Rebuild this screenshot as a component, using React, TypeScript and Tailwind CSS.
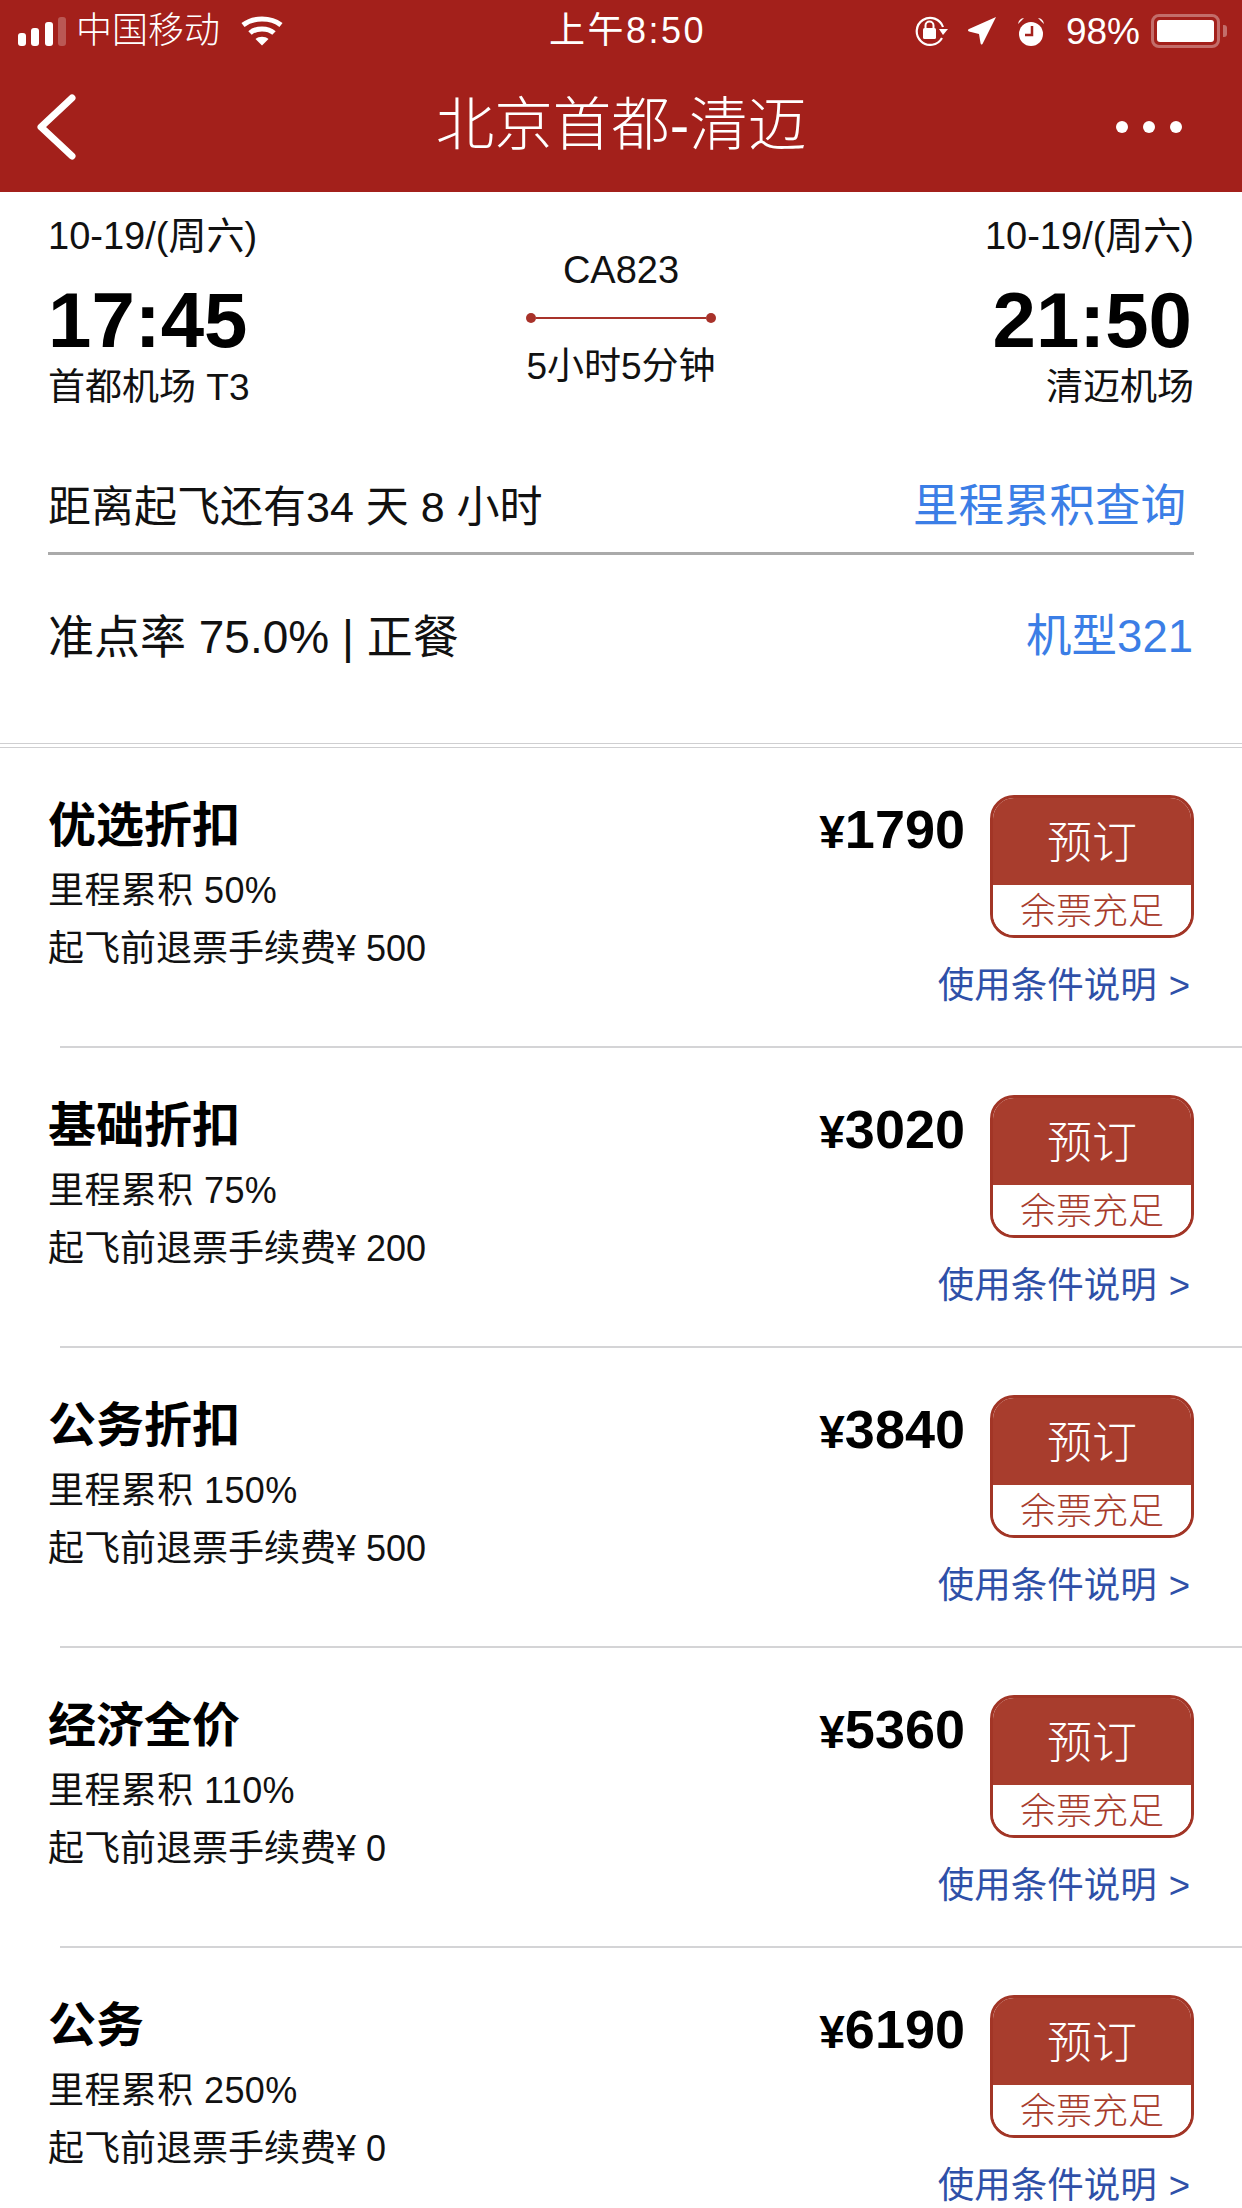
const fontStack = { fontFamily: '"Liberation Sans", "Noto Sans CJK SC", sans-serif' };

type Fare = {
  name: string;
  price: string;
  miles: string;
  fee: string;
};

const fares: Fare[] = [
  { name: "优选折扣", price: "1790", miles: "50%", fee: "500" },
  { name: "基础折扣", price: "3020", miles: "75%", fee: "200" },
  { name: "公务折扣", price: "3840", miles: "150%", fee: "500" },
  { name: "经济全价", price: "5360", miles: "110%", fee: "0" },
  { name: "公务", price: "6190", miles: "250%", fee: "0" },
];

function SignalBars() {
  return (
    <div className="flex h-[29px] w-[48px] items-end justify-between">
      <div className="h-[13px] w-[8px] rounded-[3px] bg-white" />
      <div className="h-[18px] w-[8px] rounded-[3px] bg-white" />
      <div className="h-[24px] w-[8px] rounded-[3px] bg-white" />
      <div className="h-[29px] w-[8px] rounded-[3px] bg-white/25" />
    </div>
  );
}

function WifiIcon() {
  return (
    <svg width="42" height="30" viewBox="0 0 42 30" fill="none" stroke="white" strokeWidth="5">
      <path d="M2 9 C12 1 30 1 40 9" />
      <path d="M9 17 C15 11.500 27 11.500 33 17" />
      <path d="M21 29.500 L14.500 23 C18 20 24 20 27.500 23 Z" fill="white" stroke="none" />
    </svg>
  );
}

function RotationLockIcon() {
  return (
    <svg width="36" height="30" viewBox="0 0 36 30" fill="none">
      <path d="M29 22 A13.500 13.500 0 1 1 30 11" stroke="white" strokeWidth="2.200" />
      <path d="M26 13 L35 13 L30 19 Z" fill="white" />
      <rect x="10" y="12" width="13" height="11" rx="1.500" fill="white" />
      <path d="M12.500 12 V9.500 A4 4 0 0 1 20.500 9.500 V12" stroke="white" strokeWidth="2" />
    </svg>
  );
}

function LocationIcon() {
  return (
    <svg width="28" height="28" viewBox="0 0 28 28">
      <path d="M28 0 L14.500 27 Q13 28.500 12.500 26 L11 17 L1 14.500 Q-1 13 1 12 Z" fill="white" />
    </svg>
  );
}

function AlarmIcon() {
  return (
    <svg width="28" height="29" viewBox="0 0 28 29">
      <circle cx="14" cy="17" r="12" fill="white" />
      <path d="M1 7 Q2 1.500 7 1 Z M27 7 Q26 1.500 21 1 Z" fill="white" />
      <path d="M15 9 V18 H8" fill="none" stroke="#a3201b" strokeWidth="2.500" />
    </svg>
  );
}

function BatteryIcon() {
  return (
    <div className="flex items-center gap-[3px]">
      <div className="h-[34px] w-[69px] rounded-[8px] border-[3px] border-white/35 p-[3px]">
        <div className="h-full w-full rounded-[3px] bg-white" />
      </div>
      <div className="h-[12px] w-[4px] rounded-r-[3px] bg-white/35" />
    </div>
  );
}

function StatusBar() {
  return (
    <div className="flex h-[62px] items-center pr-[15px] pl-[18px] text-[36px] leading-none text-white">
      <div className="flex flex-1 items-center">
        <SignalBars />
        <span className="ml-[10px] font-light">中国移动</span>
        <div className="ml-[21px]">
          <WifiIcon />
        </div>
      </div>
      <span className="absolute left-[549px] tracking-[2.500px]">上午8:50</span>
      <div className="flex items-center">
        <RotationLockIcon />
        <div className="ml-[19px]">
          <LocationIcon />
        </div>
        <div className="ml-[21px]">
          <AlarmIcon />
        </div>
        <span className="ml-[21px] text-[37px]">98%</span>
        <div className="ml-[11px]">
          <BatteryIcon />
        </div>
      </div>
    </div>
  );
}

function NavBar() {
  return (
    <div className="grid h-[130px] grid-cols-[1fr_auto_1fr] items-center px-[60px]">
      <svg className="-ml-[24px]" width="42" height="66" viewBox="0 0 42 66" fill="none" stroke="white" strokeWidth="7" strokeLinecap="round" strokeLinejoin="round">
        <path d="M36 4 L5 33 L36 62" />
      </svg>
      <h1 className="pb-[4px] text-[58.500px] leading-none font-light text-white">北京首都-清迈</h1>
      <div className="flex justify-end gap-[15px]">
        <div className="h-[12px] w-[12px] rounded-full bg-white" />
        <div className="h-[12px] w-[12px] rounded-full bg-white" />
        <div className="h-[12px] w-[12px] rounded-full bg-white" />
      </div>
    </div>
  );
}

function FlightSummary() {
  return (
    <div className="px-[48px] pt-[23px] text-[#111]">
      <div className="flex justify-between">
        <div>
          <p className="text-[38px] leading-[42px]">10-19/(周六)</p>
          <p className="mt-[27px] text-[78px] leading-[72px] font-bold text-black">17:45</p>
          <p className="mt-[11px] text-[37px] leading-[42px]">首都机场 T3</p>
        </div>
        <div className="flex w-[220px] flex-col items-center pt-[34px]">
          <p className="text-[38px] leading-[42px]">CA823</p>
          <div className="mt-[22px] flex w-[190px] items-center">
            <div className="h-[10px] w-[10px] rounded-full bg-[#a8322a]" />
            <div className="h-[2px] flex-1 bg-[#a8322a]" />
            <div className="h-[10px] w-[10px] rounded-full bg-[#a8322a]" />
          </div>
          <p className="mt-[23px] text-[37px] leading-[42px]">5小时5分钟</p>
        </div>
        <div className="text-right">
          <p className="text-[38px] leading-[42px]">10-19/(周六)</p>
          <p className="mt-[27px] mr-[2px] text-[78px] leading-[72px] font-bold text-black">21:50</p>
          <p className="mt-[11px] text-[37px] leading-[42px]">清迈机场</p>
        </div>
      </div>

      <div className="mt-[73px] flex items-center justify-between border-b-[3px] border-[#aaaaaa] pr-[8px] pb-[20px]">
        <p className="text-[43px] leading-[50px]">距离起飞还有34 天 8 小时</p>
        <p className="text-[45.500px] leading-[50px] text-[#3b7ee6]">里程累积查询</p>
      </div>

      <div className="mt-[57px] flex items-center justify-between">
        <p className="text-[46px] leading-[50px]">准点率 75.0% | 正餐</p>
        <p className="mr-[1px] text-[45.500px] leading-[50px] text-[#3b7ee6]">机型321</p>
      </div>
    </div>
  );
}

function FareRow({ fare }: { fare: Fare }) {
  return (
    <div className="ml-[60px] h-[300px] border-b-2 border-[#d4d4d6]">
      <div className="-ml-[12px] flex justify-between pt-[47px] pr-[48px]">
        <div>
          <p className="mt-[3px] text-[48px] leading-[56px] font-bold text-black">{fare.name}</p>
          <p className="mt-[16px] text-[36px] leading-[42px] tracking-[0.400px] text-[#111]">里程累积 {fare.miles}</p>
          <p className="mt-[16px] text-[36px] leading-[42px] text-[#111]">起飞前退票手续费¥ {fare.fee}</p>
        </div>
        <div className="flex flex-col items-end">
          <div className="flex items-start">
            <p className="mt-[3px] mr-[25px] text-[54px] leading-[62px] font-bold text-black">
              <span className="text-[46px]">¥</span>
              {fare.price}
            </p>
            <div className="w-[204px] overflow-hidden rounded-[24px] border-[3px] border-[#a23526]">
              <div className="flex h-[87px] items-center justify-center bg-[#a83d2d] pt-[4px] text-[45px] leading-none font-light text-white">
                预订
              </div>
              <div className="flex h-[50px] items-center justify-center bg-white pt-[3px] text-[36px] leading-none font-light text-[#a83d2d]">
                余票充足
              </div>
            </div>
          </div>
          <p className="mt-[27px] mr-[4px] text-[36.500px] leading-[42px] text-[#2f50a8]">
            使用条件说明<span className="ml-[12px]">&gt;</span>
          </p>
        </div>
      </div>
    </div>
  );
}

export default function App() {
  return (
    <div style={fontStack} className="relative h-[2208px] w-[1242px] overflow-hidden bg-white">
      <div className="bg-[#a3201b]">
        <StatusBar />
        <NavBar />
      </div>
      <div className="h-[551px]">
        <FlightSummary />
      </div>
      <div className="h-[5px] border-y border-[#cfcfd1]" />
      <div>
        {fares.map((fare) => (
          <FareRow key={fare.name} fare={fare} />
        ))}
      </div>
    </div>
  );
}
